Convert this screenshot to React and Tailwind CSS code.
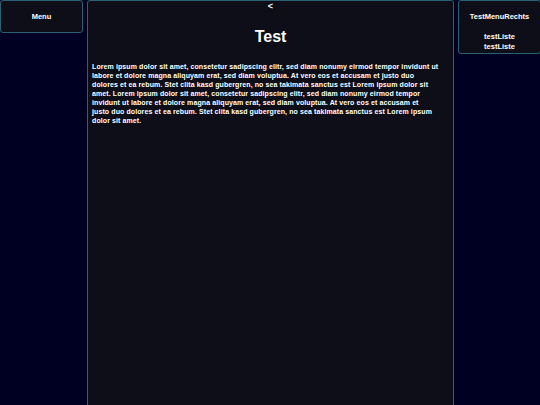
import React from 'react';

// line breaks follow the reference
const lines = [
  'Lorem ipsum dolor sit amet, consetetur sadipscing elitr, sed diam nonumy eirmod tempor invidunt ut',
  'labore et dolore magna aliquyam erat, sed diam voluptua. At vero eos et accusam et justo duo',
  'dolores et ea rebum. Stet clita kasd gubergren, no sea takimata sanctus est Lorem ipsum dolor sit',
  'amet. Lorem ipsum dolor sit amet, consetetur sadipscing elitr, sed diam nonumy eirmod tempor',
  'invidunt ut labore et dolore magna aliquyam erat, sed diam voluptua. At vero eos et accusam et',
  'justo duo dolores et ea rebum. Stet clita kasd gubergren, no sea takimata sanctus est Lorem ipsum',
  'dolor sit amet.',
];

export default function App() {
  return (
    <div className="flex h-[405px] w-[540px] items-start gap-[4px] overflow-hidden bg-[#000022] font-['Liberation_Sans',sans-serif] font-bold text-white">
      {/* left menu */}
      <div className="flex h-[33px] w-[83px] shrink-0 items-center justify-center rounded-[3px] border border-[#2c6074] bg-[#0d0e17] text-[7.5px]">
        Menu
      </div>

      {/* main */}
      <main className="flex h-[420px] w-[367px] shrink-0 flex-col rounded-[3px] border border-[#2c6074] bg-[#0d0e17] px-[4px]">
        <div className="text-center text-[9px] leading-[11px]">&lt;</div>
        <h1 className="mt-[15px] text-center text-[16px] font-black leading-[20px]">Test</h1>
        <p className="mt-[15px] text-[7px] leading-[9px] tracking-[0.1px]">
          {lines.map((l, i) => (
            <span key={i} className="block whitespace-nowrap">
              {l}
            </span>
          ))}
        </p>
      </main>

      {/* right menu */}
      <div className="flex h-[54px] w-[83px] shrink-0 flex-col items-center rounded-[3px] border border-[#2c6074] bg-[#0d0e17] pt-[11px] text-[7.5px] leading-[10px]">
        <div>TestMenuRechts</div>
        <div className="mt-[10px]">testListe</div>
        <div>testListe</div>
      </div>
    </div>
  );
}
